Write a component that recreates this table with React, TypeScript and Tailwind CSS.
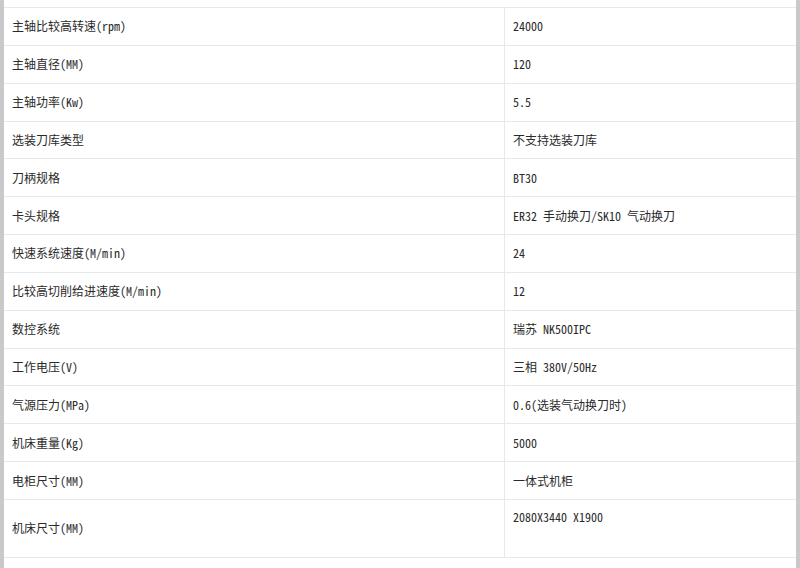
const specs: [string, string][] = [
  ["主轴比较高转速(rpm)", "24000"],
  ["主轴直径(MM)", "120"],
  ["主轴功率(Kw)", "5.5"],
  ["选装刀库类型", "不支持选装刀库"],
  ["刀柄规格", "BT30"],
  ["卡头规格", "ER32 手动换刀/SK10 气动换刀"],
  ["快速系统速度(M/min)", "24"],
  ["比较高切削给进速度(M/min)", "12"],
  ["数控系统", "瑞苏 NK500IPC"],
  ["工作电压(V)", "三相 380V/50Hz"],
  ["气源压力(MPa)", "0.6(选装气动换刀时)"],
  ["机床重量(Kg)", "5000"],
  ["电柜尺寸(MM)", "一体式机柜"],
]

export default function App() {
  return (
    <div
      className="h-[568px] w-[800px] overflow-hidden border-x-4 border-[#c9c9c9] bg-white text-[12px] text-[#2a2a2a]"
      style={{ fontFamily: '"Noto Sans Mono CJK SC", "Noto Sans CJK SC", monospace' }}
    >
      <div className="h-[8px] border-b border-[#e4eaea]" />
      {specs.map(([label, value], i) => (
        <div key={i} className="flex h-[37.85px] border-b border-[#e4eaea]">
          <div className="flex w-[501px] items-center border-r border-[#e4eaea] px-2">{label}</div>
          <div className="flex flex-1 items-center px-2">{value}</div>
        </div>
      ))}
      <div className="flex h-[58px] border-b border-[#e4eaea]">
        <div className="flex w-[501px] items-center border-r border-[#e4eaea] px-2">机床尺寸(MM)</div>
        <div className="flex-1 px-2 pt-[8px]">2080X3440 X1900</div>
      </div>
    </div>
  )
}
